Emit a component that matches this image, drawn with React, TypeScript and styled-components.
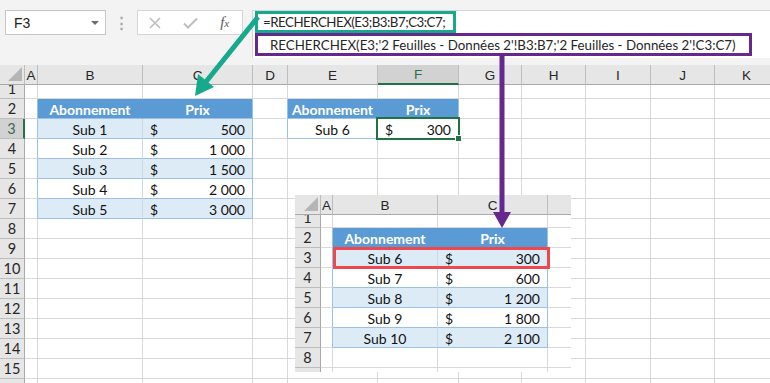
import React, { Fragment } from "react";
import styled, { createGlobalStyle, css } from "styled-components";

const GlobalStyle = createGlobalStyle`
  html, body { margin: 0; padding: 0; background: #fff; }
  body { font-family: Lato, "Liberation Sans", sans-serif; overflow: hidden; }
`;

const GREEN = "#16a98b";
const PURPLE = "#66288c";
const XL_GREEN = "#217346";
const HEAD_BG = "#e6e6e6";
const HEAD_ACTIVE = "#d2d2d2";
const HEAD_LINE = "#bdbdbd";
const GRID = "#d9d9d9";
const TBL_HEAD = "#5b9bd5";
const TBL_BAND = "#ddebf7";
const TBL_LINE = "#9bc2e6";

type Kind = "th" | "band" | "plain" | "lookup" | "selected";
type Spec = { kind: Kind; text?: string; money?: string };
type Row = { label: string; h: number };

const Frame = styled.div`
  position: relative;
  width: 770px;
  height: 383px;
  overflow: hidden;
  background: #fff;
`;

// ---------- barre de formule ----------
const TopBar = styled.div`
  display: flex;
  align-items: flex-start;
  height: 65px;
  box-sizing: border-box;
  padding: 10px 0 0 5px;
  background: #f3f3f3;
`;

const NameBox = styled.div`
  display: flex;
  align-items: center;
  justify-content: space-between;
  width: 101px;
  height: 25px;
  box-sizing: border-box;
  padding: 0 6px 0 8px;
  background: #fff;
  border: 1px solid #c6c6c6;
  font: 14px "Liberation Sans", sans-serif;
  color: #222;
`;

const Caret = styled.span`
  width: 0;
  height: 0;
  border-left: 4px solid transparent;
  border-right: 4px solid transparent;
  border-top: 4px solid #6d6d6d;
`;

const Dots = styled.div`
  width: 31px;
  height: 25px;
  display: flex;
  align-items: center;
  justify-content: center;
  color: #a8a8a8;
  font: bold 15px "Liberation Sans", sans-serif;
`;

const FxBox = styled.div`
  display: flex;
  align-items: center;
  width: 106px;
  height: 25px;
  box-sizing: border-box;
  background: #fff;
  border: 1px solid #d6d6d6;
`;

const FxSlot = styled.span`
  width: 35px;
  display: flex;
  justify-content: center;
  align-items: center;
`;

const FxLabel = styled.i`
  font: italic 15px "Liberation Serif", serif;
  color: #5a5a5a;
  small { font-size: 11px; }
`;

const FormulaArea = styled.div`
  margin-left: 9px;
  flex: 1;
  height: 48px;
  box-sizing: border-box;
  padding-left: 2px;
  background: #fff;
  border-top: 1px solid #d6d6d6;
  border-left: 1px solid #d6d6d6;
  display: flex;
  flex-direction: column;
  align-items: flex-start;
`;

const Bubble = styled.div<{ $color: string; $w: number; $h: number; $pad: number; $track?: number }>`
  width: ${p => p.$w}px;
  height: ${p => p.$h}px;
  box-sizing: border-box;
  border: 3px solid ${p => p.$color};
  padding-left: ${p => p.$pad}px;
  display: flex;
  align-items: center;
  font: 13.3px Lato, "Liberation Sans", sans-serif;
  letter-spacing: ${p => p.$track ?? 0}px;
  color: #262626;
  white-space: nowrap;
  overflow: hidden;
`;

// ---------- grille ----------
const Grid = styled.div<{ $cols: string; $rows: string }>`
  display: grid;
  grid-template-columns: ${p => p.$cols};
  grid-template-rows: ${p => p.$rows};
  background: #fff;
`;

const Corner = styled.div`
  position: relative;
  background: ${HEAD_BG};
  border-right: 1px solid ${HEAD_LINE};
  border-bottom: 1px solid #a9a9a9;
  box-sizing: border-box;
  &::after {
    content: "";
    position: absolute;
    right: 2px;
    bottom: 3px;
    border-left: 14px solid transparent;
    border-bottom: 14px solid #b5b5b5;
  }
`;

const ColHead = styled.div<{ $active?: boolean }>`
  box-sizing: border-box;
  display: flex;
  align-items: center;
  justify-content: center;
  padding-top: 1px;
  font: 13.5px "Liberation Sans", sans-serif;
  color: #262626;
  background: ${HEAD_BG};
  border-right: 1px solid ${HEAD_LINE};
  border-bottom: 1px solid #a9a9a9;
  overflow: hidden;
  ${p => p.$active && css`
    background: ${HEAD_ACTIVE};
    color: ${XL_GREEN};
    border-bottom: 2px solid ${XL_GREEN};
  `}
`;

const RowHead = styled.div<{ $active?: boolean }>`
  box-sizing: border-box;
  display: flex;
  align-items: flex-end;
  justify-content: center;
  padding-bottom: 1px;
  font: 14.5px Lato, "Liberation Sans", sans-serif;
  line-height: 17px;
  color: #262626;
  background: ${HEAD_BG};
  border-right: 1px solid #a9a9a9;
  border-bottom: 1px solid ${HEAD_LINE};
  overflow: hidden;
  ${p => p.$active && css`
    background: ${HEAD_ACTIVE};
    color: #3d6b52;
    border-right: 2px solid ${XL_GREEN};
  `}
`;

const kindStyles: Record<Kind, ReturnType<typeof css>> = {
  th: css`
    background: ${TBL_HEAD};
    color: #fff;
    font-weight: 700;
  `,
  band: css`background: ${TBL_BAND};`,
  plain: css`background: #fff;`,
  lookup: css`background: #fff;`,
  selected: css`
    position: relative;
    &::after {
      content: "";
      position: absolute;
      left: -2px;
      top: -2px;
      right: -2px;
      bottom: -2px;
      border: 2px solid ${XL_GREEN};
    }
    &::before {
      content: "";
      position: absolute;
      right: -4px;
      bottom: -4px;
      width: 5px;
      height: 5px;
      background: ${XL_GREEN};
      border: 1px solid #fff;
      z-index: 1;
    }
  `,
};

const Cell = styled.div<{ $kind?: Kind; $edge: string; $base: string }>`
  box-sizing: border-box;
  display: flex;
  align-items: center;
  justify-content: center;
  padding-top: 1px;
  font: 14px Lato, "Liberation Sans", sans-serif;
  color: #111;
  white-space: nowrap;
  border-right: 1px solid ${p => p.$edge};
  border-bottom: 1px solid ${p => p.$base};
  ${p => p.$kind && kindStyles[p.$kind]}
`;

const Money = styled.div`
  flex: 1;
  display: flex;
  justify-content: space-between;
  padding: 0 7px 0 7px;
`;

const isTable = (s?: Spec) => !!s && s.kind !== "selected";

function Sheet({
  cornerW,
  cols,
  letters,
  rows,
  data,
  activeCol,
  activeRow,
}: {
  cornerW: number;
  cols: number[];
  letters: string[];
  rows: Row[];
  data: Record<string, Spec>;
  activeCol?: string;
  activeRow?: string;
}) {
  const tpl = `${cornerW}px ${cols.map(c => c + "px").join(" ")}`;
  const rtpl = `20px ${rows.map(r => r.h + "px").join(" ")}`;
  return (
    <Grid $cols={tpl} $rows={rtpl}>
      <Corner />
      {letters.map((l, i) => (
        <ColHead key={i} $active={l !== "" && l === activeCol}>{l}</ColHead>
      ))}
      {rows.map((r, ri) => (
        <Fragment key={ri}>
          <RowHead $active={r.label !== "" && r.label === activeRow}>{r.label}</RowHead>
          {letters.map((l, i) => {
            const spec = l ? data[l + r.label] : undefined;
            const nl = letters[i + 1];
            const next = nl ? data[nl + r.label] : undefined;
            let edge = GRID;
            let base = GRID;
            if (spec && spec.kind === "th") {
              edge = next && next.kind === "th" ? TBL_HEAD : TBL_LINE;
              base = TBL_LINE;
            } else if (isTable(spec)) {
              edge = isTable(next) ? "#cfd9e3" : TBL_LINE;
              base = TBL_LINE;
            } else if (!spec && isTable(next)) {
              edge = TBL_LINE;
            }
            return (
              <Cell key={i} $kind={spec?.kind} $edge={edge} $base={base}>
                {spec?.text}
                {spec?.money && (
                  <Money>
                    <span>$</span>
                    <span>{spec.money}</span>
                  </Money>
                )}
              </Cell>
            );
          })}
        </Fragment>
      ))}
    </Grid>
  );
}

// ---------- encart (deuxième feuille) ----------
const Inset = styled.div`
  position: absolute;
  left: 295px;
  top: 195px;
  width: 276px;
  height: 177px;
  overflow: hidden;
  background: #fff;
`;

const Highlight = styled.div`
  position: absolute;
  left: 38px;
  top: 52px;
  width: 217px;
  height: 22px;
  box-sizing: border-box;
  border: 3px solid #f0464d;
`;

const Arrows = styled.svg`
  position: absolute;
  left: 0;
  top: 0;
  pointer-events: none;
`;

const nb = (s: string) => s.replace(" ", "\u00a0");

const mainData: Record<string, Spec> = {
  B2: { kind: "th", text: "Abonnement" },
  C2: { kind: "th", text: "Prix" },
  B3: { kind: "band", text: "Sub 1" },
  C3: { kind: "band", money: "500" },
  B4: { kind: "plain", text: "Sub 2" },
  C4: { kind: "plain", money: nb("1 000") },
  B5: { kind: "band", text: "Sub 3" },
  C5: { kind: "band", money: nb("1 500") },
  B6: { kind: "plain", text: "Sub 4" },
  C6: { kind: "plain", money: nb("2 000") },
  B7: { kind: "band", text: "Sub 5" },
  C7: { kind: "band", money: nb("3 000") },
  E2: { kind: "th", text: "Abonnement" },
  F2: { kind: "th", text: "Prix" },
  E3: { kind: "lookup", text: "Sub 6" },
  F3: { kind: "selected", money: "300" },
};

const insetData: Record<string, Spec> = {
  B2: { kind: "th", text: "Abonnement" },
  C2: { kind: "th", text: "Prix" },
  B3: { kind: "band", text: "Sub 6" },
  C3: { kind: "band", money: "300" },
  B4: { kind: "plain", text: "Sub 7" },
  C4: { kind: "plain", money: "600" },
  B5: { kind: "band", text: "Sub 8" },
  C5: { kind: "band", money: nb("1 200") },
  B6: { kind: "plain", text: "Sub 9" },
  C6: { kind: "plain", money: nb("1 800") },
  B7: { kind: "band", text: "Sub 10" },
  C7: { kind: "band", money: nb("2 100") },
};

const mainRows: Row[] = [
  { label: "1", h: 14 },
  ...Array.from({ length: 14 }, (_, i) => ({ label: String(i + 2), h: 20 })),
  { label: "", h: 20 },
];

const insetRows: Row[] = [
  { label: "1", h: 13 },
  ...Array.from({ length: 7 }, (_, i) => ({ label: String(i + 2), h: 20 })),
  { label: "", h: 20 },
];

export default function App() {
  return (
    <Frame>
      <GlobalStyle />
      <TopBar>
        <NameBox>
          F3
          <Caret />
        </NameBox>
        <Dots>⋮</Dots>
        <FxBox>
          <FxSlot>
            <svg width="12" height="12" viewBox="0 0 12 12">
              <path d="M1 1L11 11M11 1L1 11" stroke="#bdbdbd" strokeWidth="1.6" />
            </svg>
          </FxSlot>
          <FxSlot>
            <svg width="15" height="12" viewBox="0 0 15 12">
              <path d="M1 6.5L5 10.5L14 1.5" stroke="#bdbdbd" strokeWidth="2" fill="none" />
            </svg>
          </FxSlot>
          <FxSlot>
            <FxLabel>f<small>x</small></FxLabel>
          </FxSlot>
        </FxBox>
        <FormulaArea>
          <Bubble $color={GREEN} $w={201} $h={22} $pad={5} $track={-0.5}>
            =RECHERCHEX(E3;B3:B7;C3:C7;
          </Bubble>
          <Bubble $color={PURPLE} $w={497} $h={23} $pad={12}>
            RECHERCHEX(E3;'2 Feuilles - Données 2'!B3:B7;'2 Feuilles - Données 2'!C3:C7)
          </Bubble>
        </FormulaArea>
      </TopBar>

      <Sheet
        cornerW={25}
        cols={[13, 105, 110, 35, 90, 81, 63, 64, 65, 64, 64]}
        letters={["A", "B", "C", "D", "E", "F", "G", "H", "I", "J", "K"]}
        rows={mainRows}
        data={mainData}
        activeCol="F"
        activeRow="3"
      />

      <Inset>
        <Sheet
          cornerW={26}
          cols={[12, 105, 110, 64]}
          letters={["A", "B", "C", ""]}
          rows={insetRows}
          data={insetData}
        />
        <Highlight />
      </Inset>

      <Arrows width="770" height="383" viewBox="0 0 770 383">
        <line x1="258" y1="17" x2="205" y2="83" stroke={GREEN} strokeWidth="5" />
        <polygon points="195,96 214,87 198,74" fill={GREEN} />
        <line x1="502" y1="55" x2="502" y2="214" stroke={PURPLE} strokeWidth="5" />
        <polygon points="493,212 511,212 502,228" fill={PURPLE} />
      </Arrows>
    </Frame>
  );
}
